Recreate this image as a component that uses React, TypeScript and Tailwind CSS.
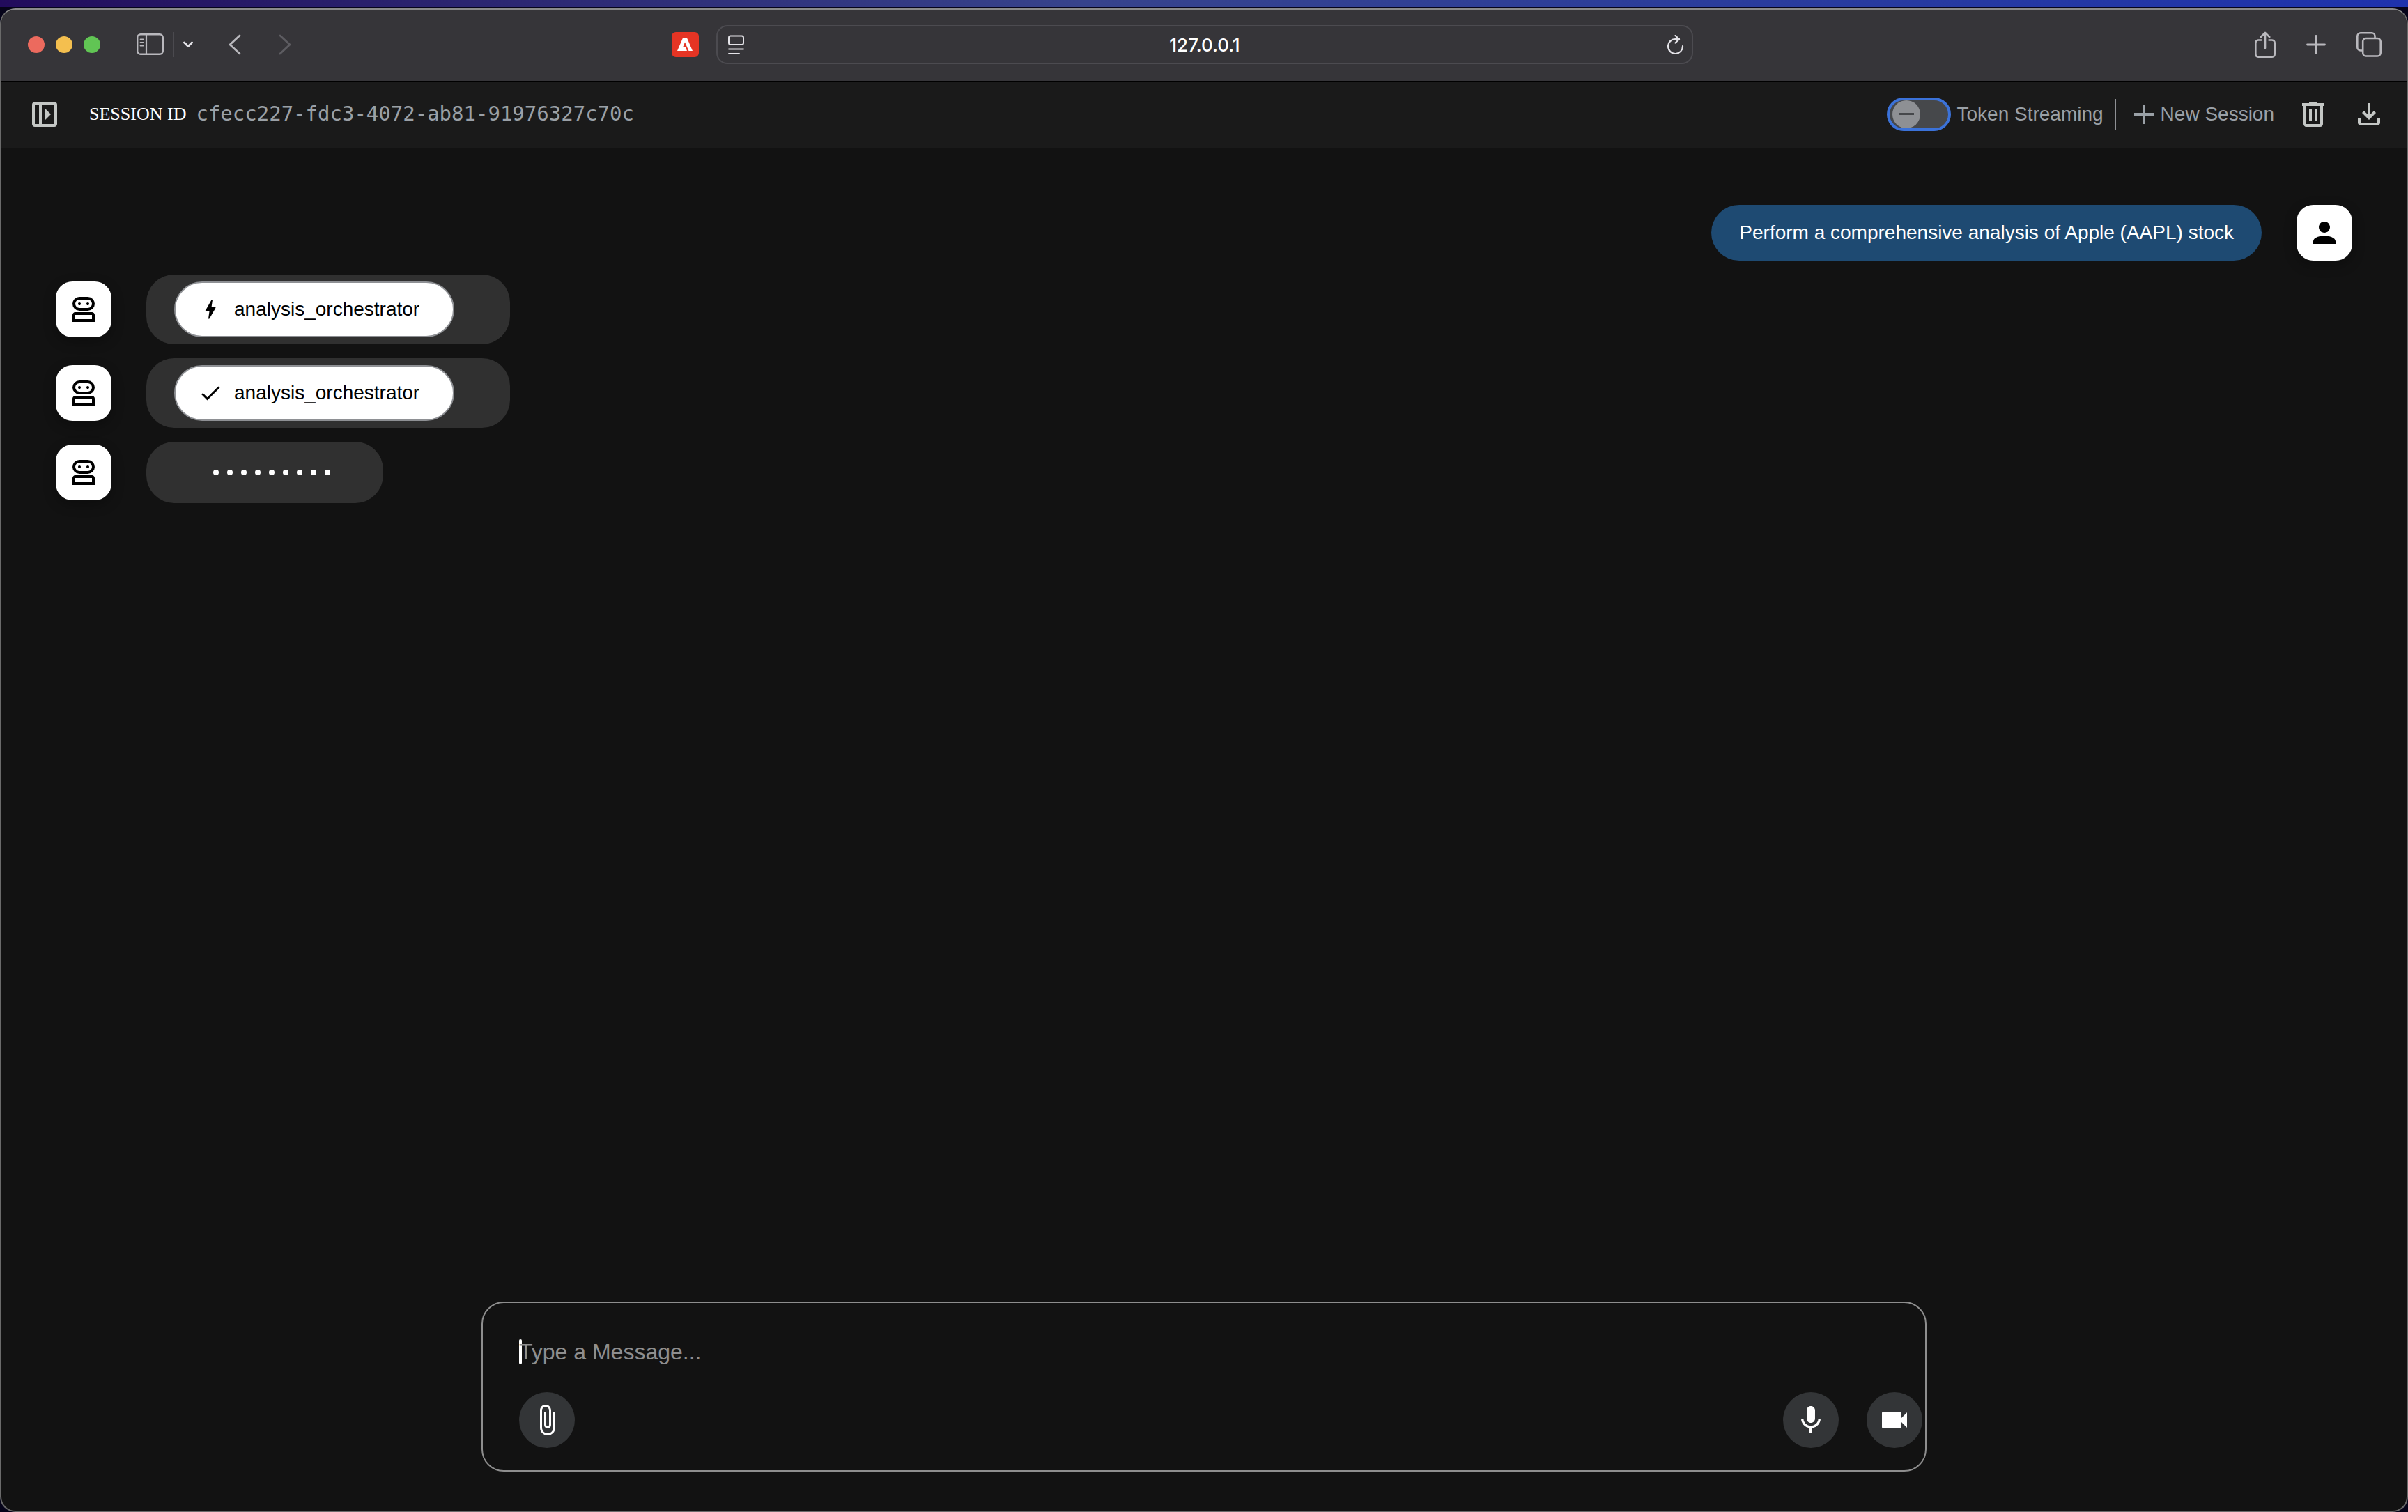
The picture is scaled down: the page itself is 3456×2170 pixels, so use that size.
import React, { useState } from "react";
import { MdAttachFile, MdBolt, MdCheck, MdMic, MdPerson, MdVideocam } from "react-icons/md";

type Event = { id: number; kind: "call" | "response" | "loading"; name?: string };

const SESSION_ID = "cfecc227-fdc3-4072-ab81-91976327c70c";

const events: Event[] = [
  { id: 1, kind: "call", name: "analysis_orchestrator" },
  { id: 2, kind: "response", name: "analysis_orchestrator" },
  { id: 3, kind: "loading" },
];

const icons = {
  panel:
    "M500-640v320l160-160-160-160ZM200-120q-33 0-56.5-23.5T120-200v-560q0-33 23.5-56.5T200-840h560q33 0 56.5 23.5T840-760v560q0 33-23.5 56.5T760-120H200Zm120-80v-560H200v560h120Zm80 0h360v-560H400v560Z",
  robot:
    "M160-120v-200q0-33 23.5-56.5T240-400h480q33 0 56.5 23.5T800-320v200H160Zm200-320q-83 0-141.5-58.5T160-640q0-83 58.5-141.5T360-840h240q83 0 141.5 58.5T800-640q0 83-58.5 141.5T600-440H360ZM240-200h480v-120H240v120Zm120-320h240q50 0 85-35t35-85q0-50-35-85t-85-35H360q-50 0-85 35t-35 85q0 50 35 85t85 35Zm28.5-91.5Q400-623 400-640t-11.5-28.5Q377-680 360-680t-28.5 11.5Q320-657 320-640t11.5 28.5Q343-600 360-600t28.5-11.5Zm240 0Q640-623 640-640t-11.5-28.5Q617-680 600-680t-28.5 11.5Q560-657 560-640t11.5 28.5Q583-600 600-600t28.5-11.5Z",
  trash:
    "M280-120q-33 0-56.5-23.5T200-200v-520h-40v-80h200v-40h240v40h200v80h-40v520q0 33-23.5 56.5T680-120H280Zm400-600H280v520h400v-520ZM360-280h80v-360h-80v360Zm160 0h80v-360h-80v360Z",
  download:
    "M480-320 280-520l56-58 104 104v-326h80v326l104-104 56 58-200 200ZM240-160q-33 0-56.5-23.5T160-240v-120h80v120h480v-120h80v120q0 33-23.5 56.5T720-160H240Z",
  add: "M440-440H200v-80h240v-240h80v240h240v80H520v240h-80v-240Z",
};

const Symbol = ({ name }: { name: keyof typeof icons }) => (
  <svg viewBox="0 -960 960 960" className="size-12 shrink-0" fill="currentColor" aria-hidden="true">
    <path d={icons[name]} />
  </svg>
);

const BrowserBar = () => (
  <div className="flex h-[103px] items-center border-b border-black bg-[#363539] pb-0.5 text-[#b9b8bd]">
    <div className="flex flex-1 items-center pl-[38px]">
      <div className="flex gap-4">
        <button aria-label="Close" className="size-6 rounded-full bg-[#ec6a5e]" />
        <button aria-label="Minimize" className="size-6 rounded-full bg-[#f4bf4f]" />
        <button aria-label="Zoom" className="size-6 rounded-full bg-[#61c554]" />
      </div>
      <button aria-label="Show sidebar" className="ml-[52px]">
        <svg viewBox="0 0 40 32" className="h-8 w-10" fill="none" stroke="currentColor" strokeLinecap="round">
          <rect x="1.2" y="1.2" width="36.6" height="28.6" rx="4.5" strokeWidth="2.4" />
          <path d="M14 1.5v28" strokeWidth="2.2" />
          <path d="M5.5 8.5h4M5.5 13h4M5.5 17.5h4" strokeWidth="1.8" />
        </svg>
      </button>
      <span className="ml-3 h-9 w-0.5 bg-[#4b4a4f]" />
      <button aria-label="Tab groups" className="ml-3 text-[#e4e3e8]">
        <svg viewBox="0 0 16 10" className="h-2.5 w-4" fill="none" stroke="currentColor" strokeWidth="3" strokeLinecap="round" strokeLinejoin="round">
          <path d="M2.5 2 8 7.5 13.5 2" />
        </svg>
      </button>
      <button aria-label="Back" className="ml-12">
        <svg viewBox="0 0 20 30" className="h-[30px] w-5" fill="none" stroke="currentColor" strokeWidth="2.8" strokeLinecap="round" strokeLinejoin="round">
          <path d="M18 2 4 15 18 28" />
        </svg>
      </button>
      <button aria-label="Forward" className="ml-[52px] text-[#5d5c61]" disabled>
        <svg viewBox="0 0 20 30" className="h-[30px] w-5" fill="none" stroke="currentColor" strokeWidth="2.8" strokeLinecap="round" strokeLinejoin="round">
          <path d="M4 2 18 15 4 28" />
        </svg>
      </button>
      <button aria-label="Adobe Acrobat" className="mr-[25px] ml-auto">
        <svg viewBox="0 0 39 36" className="h-9 w-[39px]">
          <rect width="39" height="36" rx="6" fill="#e53424" />
          <path d="M16 8.5h6l8 18.5h-5.5l-5.500-12.500-3 7.500h4l2 5H8z" fill="#fff" />
        </svg>
      </button>
    </div>
    <div className="flex h-14 w-full max-w-[1402px] items-center rounded-2xl border-2 border-[#4c4b50] pr-[11px] pl-[15px] text-[#e4e3e8]">
      <button aria-label="Page menu">
        <svg viewBox="0 0 24 28" className="h-7 w-6" fill="none" stroke="currentColor" strokeWidth="2" strokeLinecap="round">
          <rect x="1" y="1.5" width="21" height="12.5" rx="2.5" />
          <path d="M1 20.5h21M1 27h15" />
        </svg>
      </button>
      <input
        aria-label="Address"
        defaultValue="127.0.0.1"
        className="min-w-0 flex-1 bg-transparent pr-1 text-center font-['Inter',sans-serif] text-[26px] font-medium text-white outline-none"
      />
      <button aria-label="Reload">
        <svg viewBox="0 0 24 28" className="h-7 w-6" fill="none" stroke="currentColor" strokeWidth="2.2" strokeLinecap="round" strokeLinejoin="round">
          <path d="M22 16a10.5 10.5 0 1 1-10.5-10h5.5" />
          <path d="M11.5 1 17 6.3 11.5 11.5" />
        </svg>
      </button>
    </div>
    <div className="flex flex-1 items-center justify-end gap-11 pr-9">
      <button aria-label="Share">
        <svg viewBox="0 0 30 38" className="h-[38px] w-[30px]" fill="none" stroke="currentColor" strokeWidth="2.6" strokeLinecap="round" strokeLinejoin="round">
          <path d="M9.500 12.500H5a3.800 3.800 0 0 0-3.700 3.800V33A3.800 3.800 0 0 0 5 36.600h20a3.800 3.800 0 0 0 3.700-3.600V16.300A3.800 3.800 0 0 0 25 12.500h-4.500" />
          <path d="M15 24V2M8.800 8 15 1.800 21.200 8" />
        </svg>
      </button>
      <button aria-label="New tab">
        <svg viewBox="0 0 28 28" className="size-7" fill="none" stroke="currentColor" strokeWidth="2.8" strokeLinecap="round">
          <path d="M14 1.5v25M1.5 14h25" />
        </svg>
      </button>
      <button aria-label="Tab overview">
        <svg viewBox="0 0 36 36" className="size-9" fill="none" stroke="currentColor" strokeWidth="2.6">
          <rect x="9.2" y="9" width="25.500" height="25.500" rx="4.500" />
          <path d="M9 26.500H5.800a4.500 4.500 0 0 1-4.500-4.500V5.800a4.500 4.500 0 0 1 4.500-4.500H22a4.500 4.500 0 0 1 4.500 4.500V9" />
        </svg>
      </button>
    </div>
  </div>
);

const SessionBar = () => {
  const [streaming, setStreaming] = useState(false);

  return (
    <header className="flex h-[95px] items-center bg-[#1a1a1a] pr-[30px] pb-0.5 pl-[38px] text-[#c4c7c5]">
      <button aria-label="Open side panel">
        <Symbol name="panel" />
      </button>
      <span className="ml-10 font-['Liberation_Serif',serif] text-[26px] text-white">SESSION ID</span>
      <span className="ml-3.5 font-['DejaVu_Sans_Mono',monospace] text-[29px] text-[#9aa0a6]">{SESSION_ID}</span>

      <div className="ml-auto flex items-center text-[28px] text-[#9aa0a6]">
        <button
          id="streaming"
          role="switch"
          aria-checked={streaming}
          onClick={() => setStreaming((prev) => !prev)}
          className={`flex h-12 w-[92px] items-center rounded-full border-4 border-[#3b72d9] bg-[#46484b] px-1 ${
            streaming ? "justify-end" : ""
          }`}
        >
          <span className="flex size-10 items-center justify-center rounded-full bg-[#8e9094]">
            <span className="h-[3px] w-[22px] bg-[#46484b]" />
          </span>
        </button>
        <label htmlFor="streaming" className="ml-2">
          Token Streaming
        </label>
        <span className="mx-4 h-11 w-0.5 bg-[#8e9094]" />
        <button className="flex items-center">
          <Symbol name="add" />
          New Session
        </button>
        <button aria-label="Delete session" className="ml-8 text-[#c4c7c5]">
          <Symbol name="trash" />
        </button>
        <button aria-label="Export session" className="ml-8 text-[#c4c7c5]">
          <Symbol name="download" />
        </button>
      </div>
    </header>
  );
};

const Avatar = ({ children }: { children: React.ReactNode }) => (
  <div className="flex size-20 shrink-0 items-center justify-center rounded-3xl bg-white text-black shadow-[0_6px_16px_2px_rgba(0,0,0,0.25)]">
    {children}
  </div>
);

const BotEvent = ({ event }: { event: Event }) => (
  <li className="flex items-center gap-[50px]">
    <Avatar>
      <Symbol name="robot" />
    </Avatar>
    {event.kind === "loading" ? (
      <div className="flex h-[88px] w-[340px] items-center justify-center gap-3 rounded-[40px] bg-[#303030] pl-5" aria-label="Loading">
        {Array.from({ length: 9 }, (_, i) => (
          <span key={i} className="size-2 rounded-full bg-white" />
        ))}
      </div>
    ) : (
      <div className="rounded-[40px] bg-[#303030] py-2.5 pr-20 pl-10">
        <button className="flex h-20 items-center gap-4 rounded-full border-2 border-[#8e9094] bg-white pr-12 pl-8 text-[28px] text-black">
          {event.kind === "call" ? <MdBolt size={36} /> : <MdCheck size={36} />}
          {event.name}
        </button>
      </div>
    )}
  </li>
);

const Composer = () => {
  const [message, setMessage] = useState("");
  const round = "flex size-20 items-center justify-center rounded-full bg-[#333537] text-white";

  return (
    <form
      onSubmit={(e) => e.preventDefault()}
      className="mx-auto mb-14 w-full max-w-[2074px] rounded-[32px] border-2 border-[#8e8e8e] pt-[52px] pr-1 pb-8 pl-[52px]"
    >
      <div className="relative">
        <span className="absolute top-0 left-0 h-9 w-1 rounded-full bg-white" />
        <textarea
          rows={1}
          value={message}
          onChange={(e) => setMessage(e.target.value)}
          aria-label="Message"
          placeholder="Type a Message..."
          className="relative block h-9 w-full resize-none overflow-hidden text-[32px] leading-9 text-white caret-transparent outline-none placeholder:text-[#8e8e8e]"
        />
      </div>
      <div className="mt-10 flex gap-10">
        <button type="button" aria-label="Attach file" className={`${round} mr-auto`}>
          <MdAttachFile size={48} />
        </button>
        <button type="button" aria-label="Use microphone" className={round}>
          <MdMic size={48} />
        </button>
        <button type="button" aria-label="Use camera" className={round}>
          <MdVideocam size={48} />
        </button>
      </div>
    </form>
  );
};

const App = () => {
  return (
    <div className="flex min-h-screen flex-col bg-[#06041a] font-['Liberation_Sans',sans-serif]">
      <div className="h-2.5 bg-linear-to-r from-[#220b5c] via-[#37438c] via-45% to-[#1e32ad]" />
      <div className="mt-0.5 flex flex-1 flex-col overflow-hidden rounded-[22px] border-2 border-[#6a6a6a] border-t-[#8a8a8a] bg-[#121212]">
        <BrowserBar />
        <SessionBar />
        <main className="flex flex-1 flex-col justify-between">
          <ul className="flex flex-col gap-5 px-[78px] pt-[82px] pb-10">
            <li className="flex items-center justify-end gap-[50px]">
              <p className="rounded-[40px] bg-[#1e4a72] px-10 py-5 text-[28px] leading-10 text-white">
                Perform a comprehensive analysis of Apple (AAPL) stock
              </p>
              <Avatar>
                <MdPerson size={48} />
              </Avatar>
            </li>
            {events.map((event) => (
              <BotEvent key={event.id} event={event} />
            ))}
          </ul>
          <Composer />
        </main>
      </div>
    </div>
  );
};

export default App;
